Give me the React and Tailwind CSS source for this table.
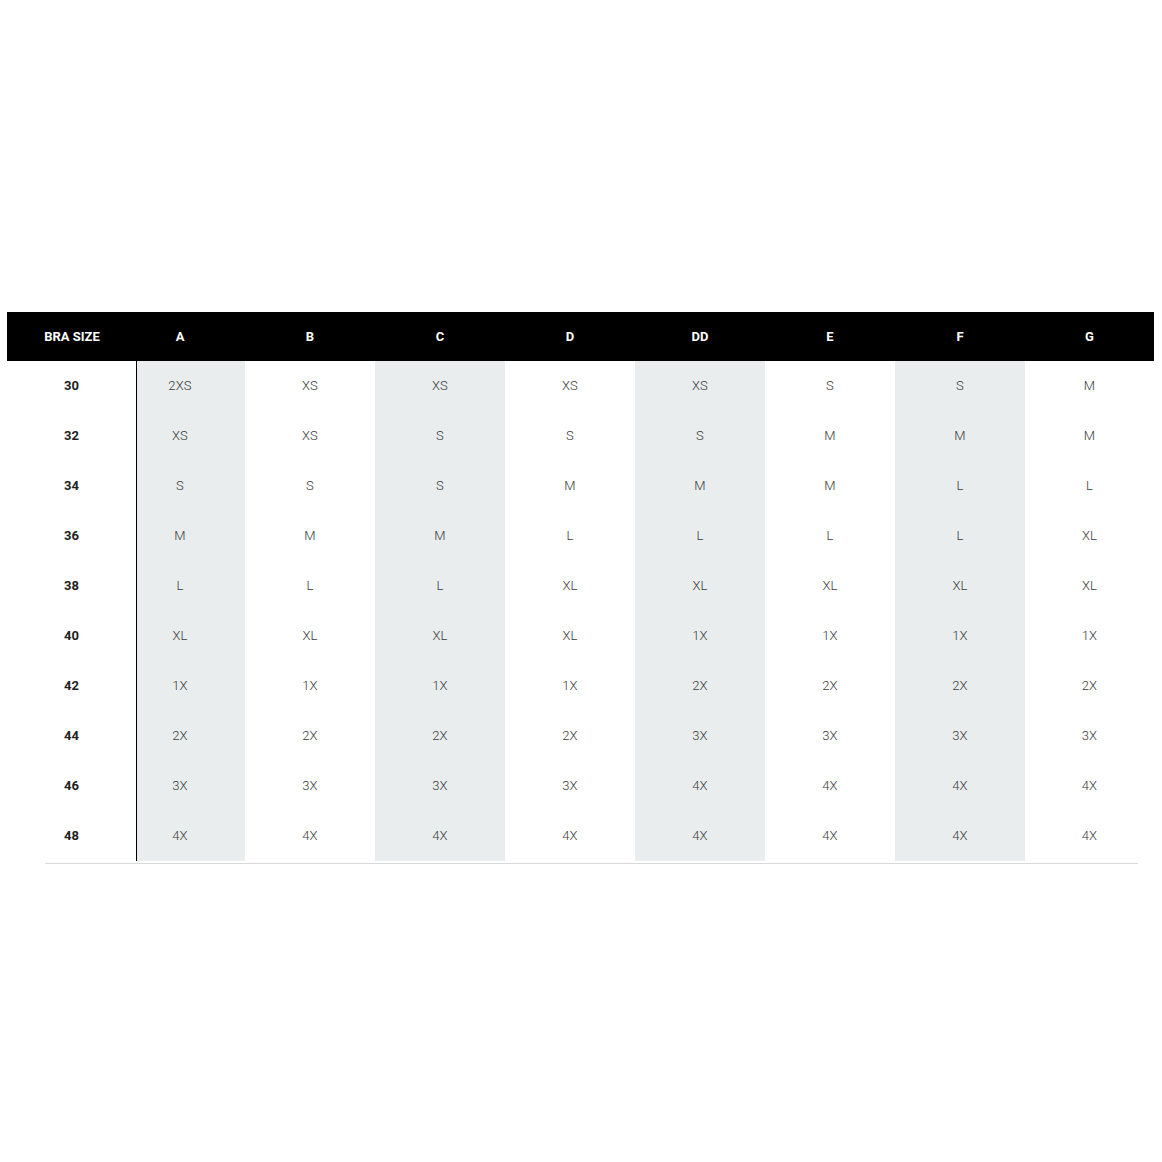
const cups = ["A", "B", "C", "D", "DD", "E", "F", "G"];

const rows = [
  { band: 30, sizes: ["2XS", "XS", "XS", "XS", "XS", "S", "S", "M"] },
  { band: 32, sizes: ["XS", "XS", "S", "S", "S", "M", "M", "M"] },
  { band: 34, sizes: ["S", "S", "S", "M", "M", "M", "L", "L"] },
  { band: 36, sizes: ["M", "M", "M", "L", "L", "L", "L", "XL"] },
  { band: 38, sizes: ["L", "L", "L", "XL", "XL", "XL", "XL", "XL"] },
  { band: 40, sizes: ["XL", "XL", "XL", "XL", "1X", "1X", "1X", "1X"] },
  { band: 42, sizes: ["1X", "1X", "1X", "1X", "2X", "2X", "2X", "2X"] },
  { band: 44, sizes: ["2X", "2X", "2X", "2X", "3X", "3X", "3X", "3X"] },
  { band: 46, sizes: ["3X", "3X", "3X", "3X", "4X", "4X", "4X", "4X"] },
  { band: 48, sizes: ["4X", "4X", "4X", "4X", "4X", "4X", "4X", "4X"] },
];

// label column, A (narrower), B-F, G
const grid =
  "grid grid-cols-[130px_108px_130px_130px_130px_130px_130px_130px_129px]";

const App = () => {
  return (
    <div
      className="w-[1162px] h-[1162px] bg-white pt-[312px] pl-[7px]"
      style={{ fontFamily: "Roboto, 'Liberation Sans', sans-serif" }}
    >
      <div className="w-[1147px]">
        <div className={`${grid} h-[49px] bg-black text-white font-bold text-[13px]`}>
          <div className="flex items-center justify-center">BRA SIZE</div>
          {cups.map((cup, i) => (
            <div
              key={cup}
              className={`flex items-center justify-center ${i === 0 ? "pr-[22px]" : ""}`}
            >
              {cup}
            </div>
          ))}
        </div>

        <div>
          {rows.map((row) => (
            <div key={row.band} className={`${grid} h-[50px]`}>
              <div className="flex items-center justify-center border-r border-black text-[13px] font-bold text-[#222]">
                {row.band}
              </div>
              {row.sizes.map((size, i) => (
                <div
                  key={i}
                  className={`flex items-center justify-center text-[13px] font-light text-[#3a3a3a] tracking-[0.2px] ${
                    i % 2 === 0 ? "bg-[#e9edee]" : "bg-white"
                  } ${i === 0 ? "pr-[22px]" : ""}`}
                >
                  {size}
                </div>
              ))}
            </div>
          ))}
        </div>

        <div className="mt-[2px] ml-[38px] w-[1093px] h-px bg-[#d9d9d9]" />
      </div>
    </div>
  );
};

export default App;
